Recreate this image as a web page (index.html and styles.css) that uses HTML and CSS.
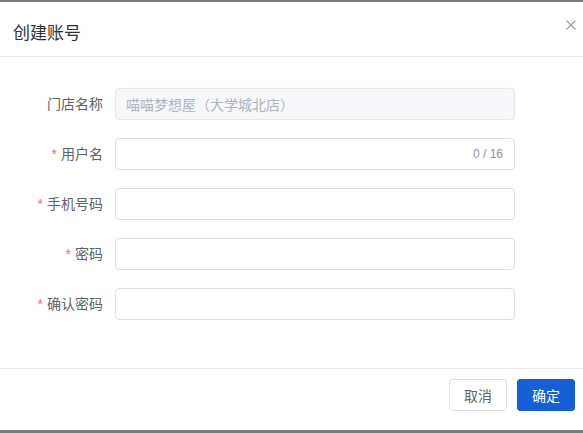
FILE: index.html
```html
<!DOCTYPE html>
<html lang="zh-CN">
<head>
<meta charset="utf-8">
<title>创建账号</title>
<link rel="stylesheet" href="styles.css">
</head>
<body>
<div class="topbar"></div>
<div class="dialog">
  <div class="header">
    <span class="title">创建账号</span>
    <span class="close" aria-label="关闭">
      <svg width="10" height="10" viewBox="0 0 10 10"><path d="M0.5 0.5 L9.5 9.5 M9.5 0.5 L0.5 9.5" stroke="#9a9a9a" stroke-width="1.1" fill="none"/></svg>
    </span>
  </div>
  <div class="body">
    <div class="row">
      <label class="label">门店名称</label>
      <div class="input disabled"><span class="value">喵喵梦想屋（大学城北店）</span></div>
    </div>
    <div class="row">
      <label class="label required">用户名</label>
      <div class="input"><span class="value"></span><span class="count">0 / 16</span></div>
    </div>
    <div class="row">
      <label class="label required">手机号码</label>
      <div class="input"></div>
    </div>
    <div class="row">
      <label class="label required">密码</label>
      <div class="input"></div>
    </div>
    <div class="row">
      <label class="label required">确认密码</label>
      <div class="input"></div>
    </div>
  </div>
  <div class="footer">
    <button class="btn">取消</button>
    <button class="btn primary">确定</button>
  </div>
</div>
<div class="bottombar"></div>
</body>
</html>
```

FILE: styles.css
```css
* { box-sizing: border-box; }
html, body {
  margin: 0;
  padding: 0;
  background: #ffffff;
  font-family: "Liberation Sans", "Noto Sans CJK SC", sans-serif;
  color: #606266;
}
.topbar {
  height: 2px;
  background: #7a7a7a;
}
.bottombar {
  height: 3px;
  background: #7a7a7a;
}
.dialog {
  width: 583px;
}
.header {
  height: 55px;
  padding: 20px 0 0 13px;
  border-bottom: 1px solid #ebedf0;
  display: flex;
  justify-content: space-between;
  align-items: flex-start;
}
.title {
  font-size: 17px;
  line-height: 24px;
  color: #303133;
}
.close {
  display: flex;
  width: 10px;
  height: 10px;
  margin: 0 7px 0 0;
  position: relative;
  top: -2px;
}
.body {
  padding: 31px 0 48px 0;
  display: flex;
  flex-direction: column;
  gap: 18px;
}
.row {
  display: flex;
  align-items: center;
  height: 32px;
}
.label {
  width: 103px;
  margin-right: 12px;
  text-align: right;
  font-size: 14px;
  line-height: 32px;
  color: #606266;
}
.label.required::before {
  content: "*";
  color: #f56c6c;
  margin-right: 4px;
}
.input {
  width: 400px;
  height: 32px;
  border: 1px solid #dcdfe6;
  border-radius: 4px;
  background: #ffffff;
  display: flex;
  align-items: center;
  justify-content: space-between;
  padding: 0 11px 0 10px;
}
.input.disabled {
  background: #f5f7fa;
  border-color: #e4e7ed;
}
.value {
  font-size: 14px;
  color: #b1b4ba;
}
.count {
  font-size: 12px;
  color: #909399;
}
.footer {
  height: 62px;
  border-top: 1px solid #ebedf0;
  display: flex;
  justify-content: flex-end;
  align-items: flex-start;
  padding: 10px 8px 0 0;
  gap: 10px;
}
.btn {
  width: 58px;
  height: 32px;
  border: 1px solid #dcdfe6;
  border-radius: 3px;
  background: #ffffff;
  color: #606266;
  font-family: "Liberation Sans", "Noto Sans CJK SC", sans-serif;
  font-size: 14px;
  padding: 0;
}
.btn.primary {
  background: #165fd6;
  border-color: #165fd6;
  color: #ffffff;
}
```
